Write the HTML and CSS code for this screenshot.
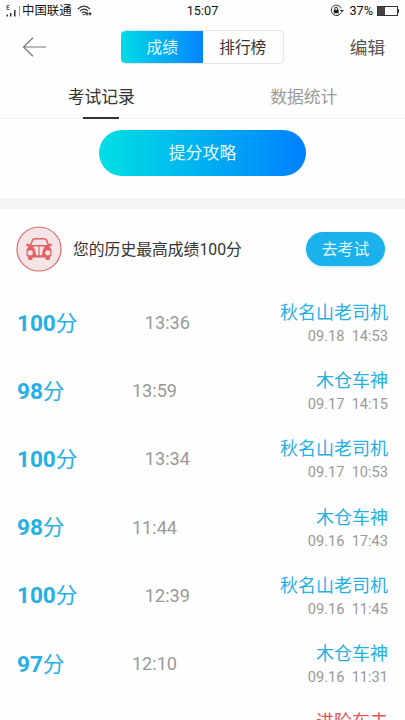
FILE: index.html
```html
<!DOCTYPE html>
<html lang="zh-CN">
<head>
<meta charset="utf-8">
<title>成绩</title>
<link rel="stylesheet" href="styles.css">
</head>
<body>
<div class="screen">
  <div class="status">
    <div class="status-left">
      <svg class="signal" width="15" height="12" viewBox="0 0 15 12" fill="none" stroke="#333">
        <path d="M3.5 .5H1v4h2.5M1 2.5h2" stroke-width=".8"/>
        <path d="M1.2 9.5v2M4.7 8v3.5M8.8 5v6.5" stroke-width="1.5"/>
        <path d="M13.5 1v10.5" stroke="#888" stroke-width=".8"/>
      </svg>
      <span>中国联通</span>
      <svg class="wifi" width="16" height="12" viewBox="0 0 16 12" fill="none" stroke="#333" stroke-width="1.1">
        <path d="M.8 4.2Q7 -1.8 13.2 4.2M2.8 6.2Q7 2.2 11.2 6.2M4.8 8.2Q7 6.2 9.2 8.2"/>
        <path d="M5.5 9.3h3L7 10.8z" fill="#333" stroke="none"/>
        <path d="M9 8.8h5M10.5 7.3 9 8.8l1.5 1.5M12.5 7.3 14 8.8l-1.5 1.5"/>
      </svg>
    </div>
    <span class="clock">15:07</span>
    <div class="status-right">
      <svg width="14" height="13" viewBox="0 0 14 13" fill="none" stroke="#333">
        <path d="M11.1 8.6A5.2 5.2 0 1 1 11.2 4.2M8.5 11.1l-2 .6" stroke-width="1"/>
        <path d="M10 6h4l-2 2.6z" fill="#333" stroke="none"/>
        <path d="M3.7 5.7h5v3.6h-5z" fill="#222" stroke="none"/>
        <path d="M4.8 5.8V4.6a1.4 1.4 0 0 1 2.8 0v1.2" stroke-width="1.1"/>
      </svg>
      <span class="percent">37%</span>
      <svg width="22" height="10" viewBox="0 0 22 10">
        <rect x=".5" y=".5" width="20" height="9" fill="#fff" stroke="#333"/>
        <path d="M1 1h7v8H1z" fill="#444"/><path d="M20.5 3.2H22v3.6h-1.5z" fill="#333"/>
      </svg>
    </div>
  </div>
  <header class="nav">
    <svg class="back" width="24" height="20" viewBox="0 0 24 20" fill="none" stroke="#777" stroke-width="1.2"><path d="M11 .7 1.5 10l9.5 9.3M1.5 10H24"/></svg>
    <div class="segments"><span class="segment active">成绩</span><span class="segment">排行榜</span></div>
    <span class="edit">编辑</span>
  </header>
  <nav class="tabs"><span class="tab selected">考试记录</span><span class="tab">数据统计</span></nav>
  <section class="promo"><div class="guide">提分攻略</div></section>
  <section class="best">
    <svg class="car" width="46" height="46" viewBox="0 0 46 46">
      <circle cx="23" cy="23" r="22" fill="#f5e4e5" stroke="#d96a6b" stroke-width="1.2"/>
      <path d="M14.5 19.5 16 15.2Q16.8 12.8 19 12.8h9q2.2 0 3 2.4l1.5 4.3" fill="none" stroke="#df6264" stroke-width="1.5"/>
      <path d="M10.3 17.8h3.2v1.2h19v-1.2h3.2v2.4h-2.5q2.3 2.2 2.3 5.2v3.4q0 1.5-1.5 2.2v1.6q0 1.4-1.4 1.4h-1.8q-1.4 0-1.4-1.4v-1.2H16.6v1.2q0 1.4-1.4 1.4h-1.8q-1.4 0-1.4-1.4V31q-1.5-.7-1.5-2.2v-3.4q0-3 2.3-5.2h-2.5z" fill="#df6264"/>
      <path d="M17.2 20.5h5.2v8.8h-2.2q-.2-5.5-3-8.8zM23.6 20.5h5.2q-2.8 3.3-3 8.8h-2.2z" fill="#f5e4e5"/>
      <circle cx="14.2" cy="26.8" r="2.6" fill="#f5e4e5"/><circle cx="31.8" cy="26.8" r="2.6" fill="#f5e4e5"/>
    </svg>
    <span class="best-text">您的历史最高成绩100分</span>
    <div class="exam">去考试</div>
  </section>
  <main class="records">
    <div class="record"><div class="score"><b>100</b>分</div><time class="duration">13:36</time><div class="result"><div class="rank">秋名山老司机</div><time class="date">09.18  14:53</time></div></div>
    <div class="record"><div class="score"><b>98</b>分</div><time class="duration">13:59</time><div class="result"><div class="rank">木仓车神</div><time class="date">09.17  14:15</time></div></div>
    <div class="record"><div class="score"><b>100</b>分</div><time class="duration">13:34</time><div class="result"><div class="rank">秋名山老司机</div><time class="date">09.17  10:53</time></div></div>
    <div class="record"><div class="score"><b>98</b>分</div><time class="duration">11:44</time><div class="result"><div class="rank">木仓车神</div><time class="date">09.16  17:43</time></div></div>
    <div class="record"><div class="score"><b>100</b>分</div><time class="duration">12:39</time><div class="result"><div class="rank">秋名山老司机</div><time class="date">09.16  11:45</time></div></div>
    <div class="record"><div class="score"><b>97</b>分</div><time class="duration">12:10</time><div class="result"><div class="rank">木仓车神</div><time class="date">09.16  11:31</time></div></div>
    <div class="record"><div class="result"><div class="rank novice">进阶车夫</div></div></div>
  </main>
</div>
</body>
</html>
```
FILE: styles.css
```css
* { box-sizing: border-box; }
body { margin: 0; background: #fefefe; font-family: Roboto, "Noto Sans CJK SC", sans-serif; color: #333; }
svg { display: block; flex: none; }
.screen { width: 405px; height: 720px; overflow: hidden; display: flex; flex-direction: column; }
.screen > * { flex: none; }
.status { height: 20px; padding: 1px 6px 0; display: grid; grid-template-columns: 1fr auto 1fr; align-items: center; font-size: 12.4px; line-height: 19px; color: #111; }
.status-left { display: flex; align-items: center; }
.signal { margin-right: 1px; }
.wifi { margin-left: 5px; margin-top: 1px; }
.clock { font-size: 12.7px; }
.status-right { display: flex; align-items: center; justify-content: flex-end; }
.percent { margin: 0 4px 0 5px; font-size: 12.7px; }
.nav { height: 54px; padding: 0 20px 0 22px; display: flex; align-items: center; }
.segments { width: 163px; height: 34px; margin-left: 75px; display: flex; border: 1px solid #e4e4e4; border-radius: 5px; overflow: hidden; font-size: 15.7px; line-height: 34px; text-align: center; background: linear-gradient(90deg, #00dbe5, #0584ff) 0 0 / 82px 100% no-repeat border-box; border-left-color: transparent; }
.segment { width: 50%; }
.active { color: #e2faff; }
.edit { margin-left: auto; padding-bottom: 2px; font-size: 17.6px; color: #555; }
.tabs { height: 45px; display: flex; border-bottom: 1px solid #f2f2f2; font-size: 16.8px; line-height: 47px; color: #999; }
.tab { width: 50%; text-align: center; }
.selected { color: #333; display: flex; flex-direction: column; align-items: center; }
.selected::after { content: ""; flex: none; width: 36px; height: 2px; margin-top: -4px; background: #333; }
.promo { height: 90px; padding-top: 11px; border-bottom: 11px solid #f4f4f4; }
.guide { width: 207px; height: 46px; margin: 0 auto; border-radius: 23px; background: linear-gradient(90deg, #00e0e4, #0080ff); color: #e2fcff; font-size: 16.9px; line-height: 47px; text-align: center; }
.best { height: 80px; padding: 0 20px 0 16px; display: flex; align-items: center; }
.best-text { margin-left: 11px; padding-bottom: 2px; font-size: 15.8px; }
.exam { width: 79px; height: 34px; margin-left: auto; border-radius: 17px; background: #1bb1ec; box-shadow: 0 1px 3px #1bb1ec44; color: #e6f9ff; font-size: 15.8px; line-height: 35px; text-align: center; }
.record { height: 68.2px; padding: 0 17px; display: flex; align-items: center; }
.score { margin-right: 67.5px; padding-bottom: 4px; font-size: 21.6px; color: #24b0e4; }
.score b { font-size: 22.5px; font-weight: 700; }
.duration { padding-bottom: 1px; font-size: 18.1px; color: #999; }
.result { height: 48px; margin-left: auto; text-align: right; }
.rank { font-size: 18px; line-height: 28px; color: #24b0e4; }
.date { display: block; font-size: 14.6px; line-height: 18px; color: #999; white-space: pre; }
.novice { color: #e65454; }
```
